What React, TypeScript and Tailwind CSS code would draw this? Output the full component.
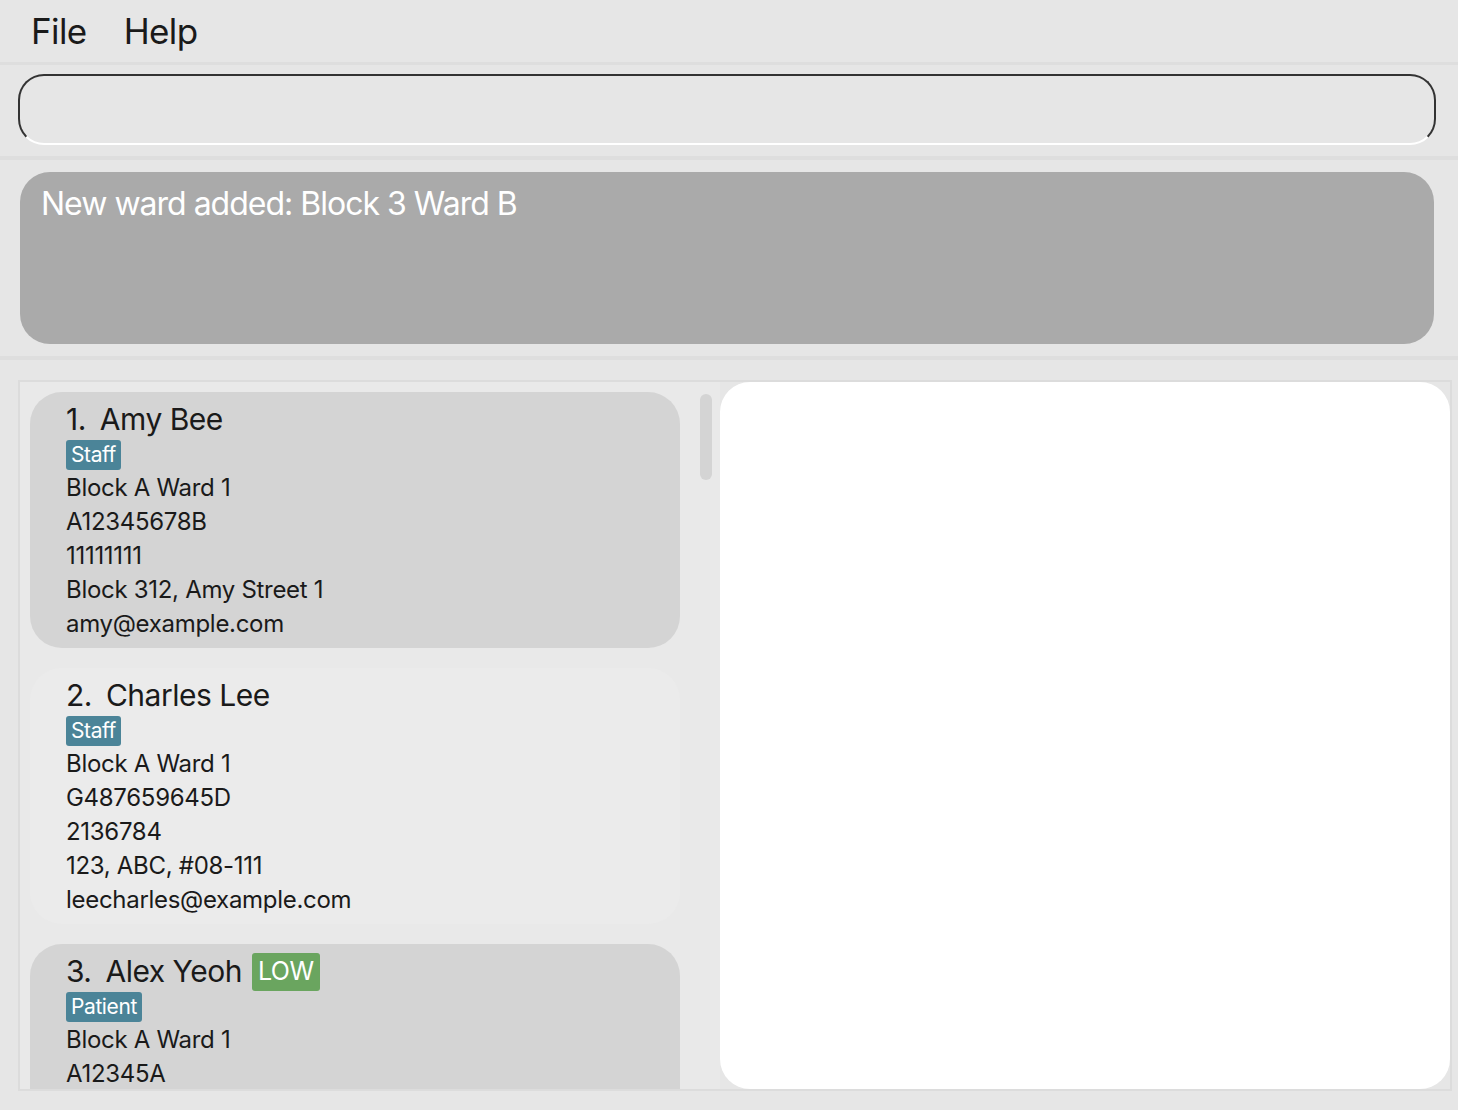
import React from "react"

type Person = {
  name: string
  role: string
  priority?: string
  lines: string[]
}

const people: Person[] = [
  {
    name: "Amy Bee",
    role: "Staff",
    lines: ["Block A Ward 1", "A12345678B", "11111111", "Block 312, Amy Street 1", "amy@example.com"],
  },
  {
    name: "Charles Lee",
    role: "Staff",
    lines: ["Block A Ward 1", "G487659645D", "2136784", "123, ABC, #08-111", "leecharles@example.com"],
  },
  {
    name: "Alex Yeoh",
    role: "Patient",
    priority: "LOW",
    lines: ["Block A Ward 1", "A12345A"],
  },
]

const PersonCard: React.FC<{ p: Person; index: number }> = ({ p, index }) => {
  const odd = index % 2 === 0
  return (
    <div
      className={`shrink-0 h-[256px] rounded-[32px] pl-[36px] pt-[8px] ${
        odd ? "bg-[#d4d4d4]" : "bg-[#ebebeb]"
      }`}
    >
      <div className="flex items-center h-[40px] text-[30px] text-[#1a1a1a] tracking-[-0.5px]">
        <span>{index + 1}.</span>
        <span className="ml-[14px]">{p.name}</span>
        {p.priority && (
          <span className="ml-[10px] px-[6px] h-[38px] flex items-center rounded-[3px] bg-[#6aa55f] text-white text-[25px]">
            {p.priority}
          </span>
        )}
      </div>
      <div className="flex">
        <span className="px-[5px] h-[30px] flex items-center rounded-[3px] bg-[#4b8498] text-white text-[21px] tracking-[-0.4px]">
          {p.role}
        </span>
      </div>
      <div className="mt-[1px] text-[24px] text-[#1a1a1a] tracking-[-0.3px]">
        {p.lines.map((l) => (
          <div key={l} className="h-[34px] leading-[34px]">
            {l}
          </div>
        ))}
      </div>
    </div>
  )
}

export default function App() {
  return (
    <div
      className="w-[1458px] h-[1110px] bg-[#e6e6e6] flex flex-col overflow-hidden"
      style={{ fontFamily: "Inter, 'Noto Sans', sans-serif" }}
    >
      {/* menu bar */}
      <div className="h-[62px] flex items-center pl-[31px] gap-[37px] text-[35px] text-[#1a1a1a] tracking-[-0.6px]">
        <span>File</span>
        <span>Help</span>
      </div>
      <div className="h-[3px] bg-[#dedede]" />

      {/* command box */}
      <div className="pt-[9px] pl-[18px] pr-[22px] h-[91px]">
        <div className="h-[71px] rounded-[26px] border-2 border-[#333333] border-b-white bg-[#e6e6e6]" />
      </div>
      <div className="h-[4px] bg-[#dedede]" />

      {/* result display */}
      <div className="pt-[12px] pl-[20px] pr-[24px] h-[196px]">
        <div className="h-[172px] rounded-[30px] bg-[#aaaaaa] pl-[21px] pt-[8px] text-white text-[32px] tracking-[-1px]">
          New ward added: Block 3 Ward B
        </div>
      </div>
      <div className="h-[4px] bg-[#dedede]" />

      {/* lists */}
      <div className="pt-[20px] pl-[18px] pr-[6px] h-[751px]">
        <div className="h-[711px] border-2 border-[#dcdcdc] flex">
          <div className="w-[700px] h-full bg-[#e9e9e9] flex overflow-hidden">
            <div className="w-[660px] h-full pl-[10px] pt-[10px] flex flex-col gap-[20px] overflow-hidden">
              {people.map((p, i) => (
                <PersonCard key={p.name} p={p} index={i} />
              ))}
            </div>
            <div className="ml-[20px] mt-[12px] w-[12px] h-[86px] rounded-full bg-[#d4d4d4]" />
          </div>
          <div className="flex-1 bg-white rounded-[30px]" />
        </div>
      </div>
    </div>
  )
}
